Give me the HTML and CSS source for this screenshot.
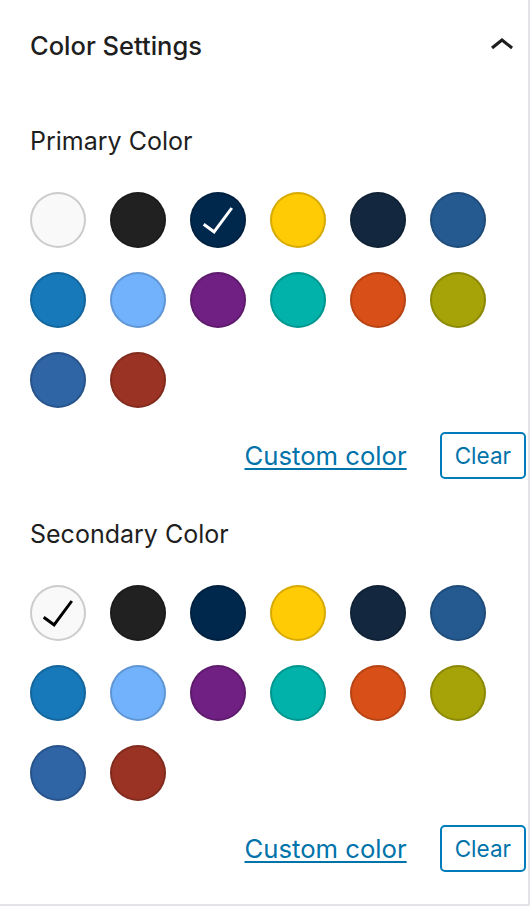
FILE: index.html
```html
<!DOCTYPE html>
<html lang="en">
<head>
<meta charset="utf-8">
<title>Color Settings</title>
<link rel="stylesheet" href="styles.css">
</head>
<body>
<div class="panel">
  <div class="panel-header">
    <h2 class="panel-title">Color Settings</h2>
    <svg class="chevron" viewBox="0 0 24 24" width="48" height="48" aria-hidden="true"><path d="M6.5 12.4L12 8l5.5 4.4-.9 1.2L12 10l-4.5 3.6-1-1.2z"/></svg>
  </div>
  <div class="panel-body">
    <div class="control">
      <div class="control-label">Primary Color</div>
      <div class="swatches">
        <button class="swatch swatch-light" style="background:#f9f9f9"></button>
        <button class="swatch" style="background:#212121"></button>
        <button class="swatch is-selected" style="background:#00274c"><svg class="check" viewBox="0 0 24 24" width="48" height="48"><path d="M18.3 5.6L9.9 16.9l-4.6-3.4-.9 1.2 5.8 4.3 9.3-12.6z" fill="#fff"/></svg></button>
        <button class="swatch" style="background:#ffcb05"></button>
        <button class="swatch" style="background:#13283f"></button>
        <button class="swatch" style="background:#255a91"></button>
        <button class="swatch" style="background:#1779ba"></button>
        <button class="swatch" style="background:#72b2fc"></button>
        <button class="swatch" style="background:#702082"></button>
        <button class="swatch" style="background:#00b2a9"></button>
        <button class="swatch" style="background:#d85018"></button>
        <button class="swatch" style="background:#a5a308"></button>
        <button class="swatch" style="background:#2f64a5"></button>
        <button class="swatch" style="background:#9a3324"></button>
      </div>
      <div class="actions">
        <a class="custom-link" href="#">Custom color</a>
        <button class="clear-btn">Clear</button>
      </div>
    </div>
    <div class="control control-second">
      <div class="control-label">Secondary Color</div>
      <div class="swatches">
        <button class="swatch swatch-light is-selected" style="background:#f9f9f9"><svg class="check" viewBox="0 0 24 24" width="48" height="48"><path d="M18.3 5.6L9.9 16.9l-4.6-3.4-.9 1.2 5.8 4.3 9.3-12.6z" fill="#000"/></svg></button>
        <button class="swatch" style="background:#212121"></button>
        <button class="swatch" style="background:#00274c"></button>
        <button class="swatch" style="background:#ffcb05"></button>
        <button class="swatch" style="background:#13283f"></button>
        <button class="swatch" style="background:#255a91"></button>
        <button class="swatch" style="background:#1779ba"></button>
        <button class="swatch" style="background:#72b2fc"></button>
        <button class="swatch" style="background:#702082"></button>
        <button class="swatch" style="background:#00b2a9"></button>
        <button class="swatch" style="background:#d85018"></button>
        <button class="swatch" style="background:#a5a308"></button>
        <button class="swatch" style="background:#2f64a5"></button>
        <button class="swatch" style="background:#9a3324"></button>
      </div>
      <div class="actions">
        <a class="custom-link" href="#">Custom color</a>
        <button class="clear-btn">Clear</button>
      </div>
    </div>
  </div>
</div>
</body>
</html>
```
FILE: styles.css
```css
html, body {
  margin: 0;
  padding: 0;
  background: #fff;
}

body {
  font-family: Inter, "Noto Sans", "Liberation Sans", sans-serif;
  color: #1e1e1e;
}

.panel {
  width: 530px;
  height: 906px;
  box-sizing: border-box;
  border-right: 2px solid #e2e4e7;
  border-bottom: 2px solid #e2e4e7;
}

.panel-header {
  height: 92px;
  display: flex;
  align-items: center;
  justify-content: space-between;
  padding: 0 2px 0 30px;
}

.panel-title {
  margin: 0;
  font-size: 25.5px;
  line-height: 32px;
  font-weight: 500;
  color: #1e1e1e;
}

.chevron {
  display: block;
  fill: #1e1e1e;
}

.panel-body {
  padding: 0 2px 0 30px;
}

.control {
  margin-top: 33px;
}

.control-second {
  margin-top: 39px;
}

.control-label {
  font-size: 25px;
  line-height: 32px;
  font-weight: 400;
  color: #1e1e1e;
  margin-bottom: 35px;
}

.swatches {
  display: grid;
  grid-template-columns: repeat(6, 56px);
  gap: 24px;
}

.swatch {
  width: 56px;
  height: 56px;
  border: 0;
  padding: 0;
  border-radius: 50%;
  box-shadow: inset 0 0 0 2px rgba(0, 0, 0, 0.16);
  display: flex;
  align-items: center;
  justify-content: center;
  cursor: pointer;
}

.swatch-light {
  box-shadow: inset 0 0 0 2px #cccccc;
}

.check {
  display: block;
}

.actions {
  margin-top: 24px;
  display: flex;
  align-items: center;
  justify-content: flex-end;
  gap: 33px;
}

.custom-link {
  font-size: 25.7px;
  line-height: 32px;
  color: #0073aa;
  text-decoration: underline;
  text-decoration-thickness: 2px;
  text-underline-offset: 3px;
}

.clear-btn {
  height: 47px;
  box-sizing: border-box;
  padding: 0 13px;
  border: 2px solid #007cba;
  border-radius: 5px;
  background: #fff;
  color: #0073aa;
  font-family: inherit;
  font-size: 22.5px;
  cursor: pointer;
}
```
